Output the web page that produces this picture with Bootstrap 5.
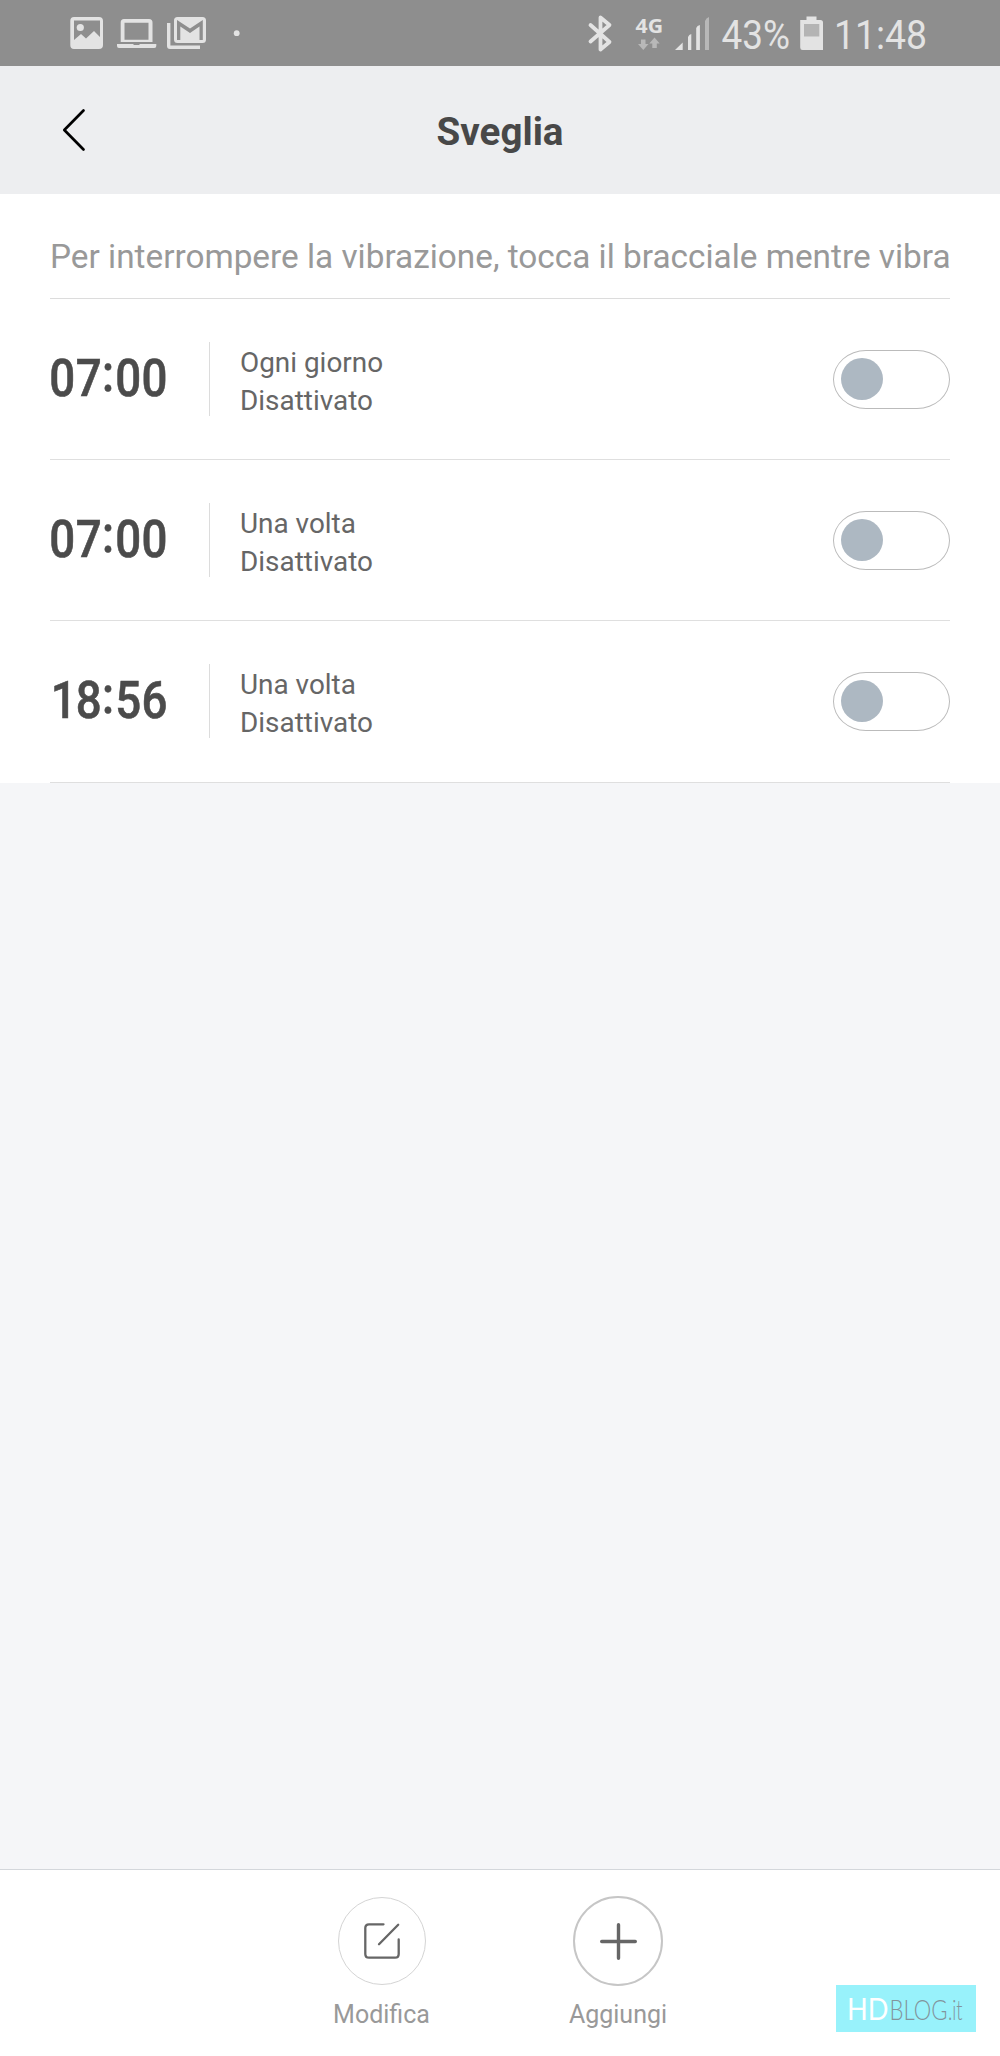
<!DOCTYPE html>
<html lang="it">
<head>
<meta charset="utf-8">
<meta name="viewport" content="width=device-width, initial-scale=1">
<title>Sveglia</title>
<link rel="stylesheet" href="https://cdn.jsdelivr.net/npm/bootstrap@5.3.0/dist/css/bootstrap.min.css">
<style>
body{font-family:Roboto,"Liberation Sans",sans-serif;background:#f5f6f8;height:2056px;color:#666}
svg{display:block;flex:none;overflow:visible}
svg text{font-family:Roboto,"Liberation Sans",sans-serif}
.statusbar{height:66px;background:#8e8e8e;padding:0 72px 0 70px;color:#e3e3e3}
.titlebar{height:128px;background:#edeef0;padding:0 62px}
.titlebar h1{font-size:38.6px;font-weight:700;color:#484848;line-height:46px;margin-top:4px}
.side-slot{width:24px}
.hint{height:105px;margin:0 50px;border-bottom:1px solid #dcdcdc;font-size:33.33px;line-height:40px;padding-top:43px;color:#999;white-space:nowrap}
.alarm{height:161.2px;margin:0 50px;border-bottom:1.4px solid #dfdfdf}
.clock{width:160px;height:74px;border-right:1px solid #dcdcdc}
.clock text{font-size:52.5px;font-weight:500;fill:#4b4b4b;stroke:#4b4b4b;stroke-width:.6px}
.info{font-size:27.9px;line-height:37.6px;margin-left:30px;color:#666;padding-top:5px}
.toggle{width:117px;height:59px;border:1.5px solid #bbb;border-radius:33px/29.5px;padding-left:7px}
.knob{width:42px;height:42px;border-radius:50%;background:#adb8c2}
.bottombar{height:187px;background:#fff;border-top:1px solid #d3d7db}
.action{width:236px;padding-top:26px;color:#999;font-size:25px;line-height:30px}
.action:first-child{padding-top:27px;padding-right:1px}
.ring{width:88px;height:88px;border:1.4px solid #d4d4d4}
.ring-strong{width:90px;height:90px;border:2px solid #c6c6c6}
.action span{margin-top:14px}
.action:first-child span{margin-top:15px}
.watermark{right:24px;bottom:24px;width:140px;height:47px;background:#98f2fb}
.watermark text{font-family:Lato,sans-serif;font-weight:300}
</style>
<script src="https://cdn.jsdelivr.net/npm/bootstrap@5.3.0/dist/js/bootstrap.bundle.min.js"></script>
</head>
<body class="d-flex flex-column position-relative m-0 overflow-hidden">
<div class="statusbar d-flex justify-content-between flex-shrink-0">
  <svg width="180" height="66" viewBox="70 0 180 66" fill="currentColor">
    <path fill-rule="evenodd" d="M74 17h25q4 0 4 4v24q0 4-4 4H74q-3.700 0-3.700-4V21q0-4 3.700-4ZM74 20.500V40l7-6 5 4.500 8-7.500 6 6V20.500Z"/>
    <circle cx="80.300" cy="27.500" r="3.600"/>
    <path fill-rule="evenodd" d="M124 19h25q3.500 0 3.500 3.500v19.500H120.700V22.500q0-3.500 3.300-3.500ZM124.500 22.700v17h24v-17Z"/>
    <path d="M117 44h16l1 1h5l1-1h16.300v2q0 2-2 2H119q-2 0-2-2Z"/>
    <path d="M167 23h3.400v22.500H200v3.500h-30q-3 0-3-3Z"/>
    <path fill-rule="evenodd" d="M177.500 17h25q3.500 0 3.500 3.500v19q0 3.500-3.500 3.500h-25q-3.500 0-3.500-3.500v-19q0-3.500 3.500-3.500ZM177 20v20h3.300V26.500l9.700 6.500 9.500-6.500V40h3.300V20l-12.800 8.500Z"/>
    <circle cx="236.700" cy="33.200" r="2.900"/>
  </svg>
  <svg width="340" height="66" viewBox="588 0 340 66" fill="currentColor">
    <path d="M590.500 25l19 17-9 7.500V17.500l9 7.500-19 16.500" fill="none" stroke="currentColor" stroke-width="3.800" stroke-linejoin="round" stroke-linecap="round"/>
    <text x="635.500" y="33" font-size="20" font-weight="700" textLength="27.500" lengthAdjust="spacingAndGlyphs" style="font-family:'Noto Sans',sans-serif">4G</text>
    <g fill="#b8b8b8"><path d="M641 39.500h4.500V44h3l-5.200 6-5.300-6h3Z"/><path d="M652.300 48h4.500v-4.500h2.900L654.500 37.500l-5.200 6h3Z"/><path d="M705 21q1-3 4-4v33h-4Z"/></g>
    <path d="M675 50l7.700-7.500V50ZM688 37q1-2.500 3.300-3v16H688ZM696.200 28q1-2.500 3.700-3v25h-3.700Z"/>
    <text x="721.500" y="49.200" font-size="41.500" textLength="68.500" lengthAdjust="spacingAndGlyphs">43%</text>
    <path d="M806.500 16.500h10v3.500h4q2.500 0 2.500 2.500V50H802.500q-2.300 0-2.300-2.500V20h6.300Z"/><path d="M804 24h15.300v12.500H804Z" fill="#b4b4b4"/>
    <text x="834" y="49.200" font-size="41.500" textLength="93" lengthAdjust="spacingAndGlyphs">11:48</text>
  </svg>
</div>
<header class="titlebar d-flex align-items-center justify-content-between flex-shrink-0">
  <svg class="side-slot" width="24" height="44" viewBox="0 0 24 44"><path d="M21.500 2.500 2.300 22l19.200 19.500" fill="none" stroke="#000" stroke-width="2.700" stroke-linecap="round" stroke-linejoin="round"/></svg>
  <h1 class="mb-0">Sveglia</h1>
  <div class="side-slot"></div>
</header>
<main class="flex-grow-1">
  <section class="bg-white">
    <div class="hint">Per interrompere la vibrazione, tocca il bracciale mentre vibra</div>
    <div class="alarm d-flex align-items-center">
      <div class="clock"><svg width="120" height="74"><text transform="scale(.87 1)" x="-1 29.500 59.700 75 105.200" y="53.700 53.700 48.500 53.700 53.700">07:00</text></svg></div>
      <div class="info">Ogni giorno<br>Disattivato</div>
      <div class="toggle d-flex align-items-center ms-auto"><div class="knob"></div></div>
    </div>
    <div class="alarm d-flex align-items-center">
      <div class="clock"><svg width="120" height="74"><text transform="scale(.87 1)" x="-1 29.500 59.700 75 105.200" y="53.700 53.700 48.500 53.700 53.700">07:00</text></svg></div>
      <div class="info">Una volta<br>Disattivato</div>
      <div class="toggle d-flex align-items-center ms-auto"><div class="knob"></div></div>
    </div>
    <div class="alarm d-flex align-items-center">
      <div class="clock"><svg width="120" height="74"><text transform="scale(.87 1)" x="1 29.500 59.700 75 105.200" y="53.700 53.700 48.500 53.700 53.700">18:56</text></svg></div>
      <div class="info">Una volta<br>Disattivato</div>
      <div class="toggle d-flex align-items-center ms-auto"><div class="knob"></div></div>
    </div>
  </section>
</main>
<footer class="bottombar d-flex justify-content-center flex-shrink-0">
  <div class="action d-flex flex-column align-items-center">
    <div class="ring rounded-circle d-flex align-items-center justify-content-center">
      <svg width="36" height="36" viewBox="0 0 36 36" fill="none" stroke="#666" stroke-width="2.300" stroke-linecap="round"><path d="M19.500 1.300H5q-3.700 0-3.700 3.700v26q0 3.700 3.700 3.700h26q3.700 0 3.700-3.700V16.500M34.200 1.700 15 21.300"/></svg>
    </div>
    <span>Modifica</span>
  </div>
  <div class="action d-flex flex-column align-items-center">
    <div class="ring-strong rounded-circle d-flex align-items-center justify-content-center">
      <svg width="37" height="37" viewBox="0 0 37 37" stroke="#666" stroke-width="3.400" stroke-linecap="round"><path d="M18.500 1.700v33.600M1.700 18.500h33.600"/></svg>
    </div>
    <span>Aggiungi</span>
  </div>
</footer>
<div class="watermark position-absolute">
  <svg width="140" height="47"><text y="35" fill="#82949c" font-size="27"><tspan x="11" font-size="31.500" fill="#fff" textLength="41.500" lengthAdjust="spacingAndGlyphs" style="font-weight:400">HD</tspan><tspan x="53.500" textLength="58" lengthAdjust="spacingAndGlyphs">BLOG</tspan><tspan x="112" textLength="14.500" lengthAdjust="spacingAndGlyphs">.it</tspan></text></svg>
</div>
</body>
</html>
